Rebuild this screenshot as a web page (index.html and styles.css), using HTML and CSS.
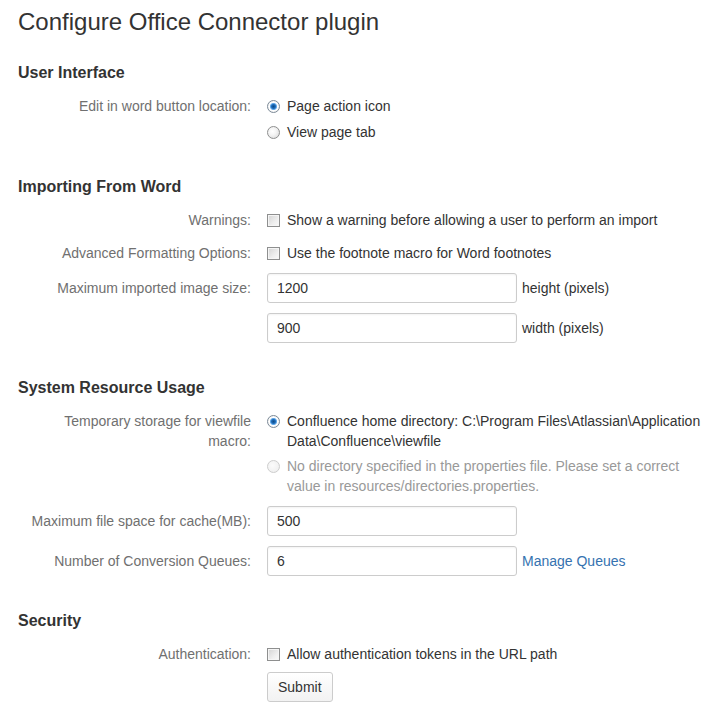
FILE: index.html
```html
<!DOCTYPE html>
<html lang="en">
<head>
    <meta charset="UTF-8">
    <title>Configure Office Connector plugin</title>
    <link rel="stylesheet" href="styles.css">
</head>
<body>
    <div class="page">
        <h1>Configure Office Connector plugin</h1>

        <form class="config-form">
            <div class="section section-first">
                <h2>User Interface</h2>
                <div class="field-group field-choice">
                    <label>Edit in word button location:</label>
                    <div class="choices">
                        <div class="option">
                            <input type="radio" name="location" checked>
                            <span>Page action icon</span>
                        </div>
                        <div class="option">
                            <input type="radio" name="location">
                            <span>View page tab</span>
                        </div>
                    </div>
                </div>
            </div>

            <div class="section">
                <h2>Importing From Word</h2>
                <div class="field-group field-choice">
                    <label>Warnings:</label>
                    <div class="option">
                        <input type="checkbox">
                        <span>Show a warning before allowing a user to perform an import</span>
                    </div>
                </div>
                <div class="field-group field-choice">
                    <label>Advanced Formatting Options:</label>
                    <div class="option">
                        <input type="checkbox">
                        <span>Use the footnote macro for Word footnotes</span>
                    </div>
                </div>
                <div class="field-group field-text">
                    <label>Maximum imported image size:</label>
                    <input class="text" type="text" value="1200">
                    <span class="suffix">height (pixels)</span>
                </div>
                <div class="field-group field-text">
                    <label></label>
                    <input class="text" type="text" value="900">
                    <span class="suffix">width (pixels)</span>
                </div>
            </div>

            <div class="section">
                <h2>System Resource Usage</h2>
                <div class="field-group field-choice">
                    <label>Temporary storage for viewfile macro:</label>
                    <div class="choices choices-tight">
                        <div class="option">
                            <input type="radio" name="storage" checked>
                            <span>Confluence home directory: C:\Program Files\Atlassian\Application Data\Confluence\viewfile</span>
                        </div>
                        <div class="option disabled">
                            <input type="radio" name="storage" disabled>
                            <span>No directory specified in the properties file. Please set a correct value in resources/directories.properties.</span>
                        </div>
                    </div>
                </div>
                <div class="field-group field-text">
                    <label>Maximum file space for cache(MB):</label>
                    <input class="text" type="text" value="500">
                </div>
                <div class="field-group field-text">
                    <label>Number of Conversion Queues:</label>
                    <input class="text" type="text" value="6">
                    <a class="suffix" href="#">Manage Queues</a>
                </div>
            </div>

            <div class="section">
                <h2>Security</h2>
                <div class="field-group field-choice">
                    <label>Authentication:</label>
                    <div class="option">
                        <input type="checkbox">
                        <span>Allow authentication tokens in the URL path</span>
                    </div>
                </div>
                <div class="field-group buttons">
                    <label></label>
                    <button class="button" type="button">Submit</button>
                </div>
            </div>
        </form>
    </div>
</body>
</html>
```

FILE: styles.css
```css
body {
    margin: 0;
    background-color: #fff;
    color: #333;
    font-family: "Liberation Sans", Arial, sans-serif;
    font-size: 14px;
    line-height: 20px;
}

.page {
    padding: 0 10px 0 18px;
}

h1 {
    font-size: 24px;
    font-weight: normal;
    line-height: 30px;
    margin: 7px 0 0;
    color: #333;
}

h2 {
    font-size: 16px;
    font-weight: bold;
    line-height: 20px;
    margin: 0 0 10px;
    color: #333;
}

.section {
    margin-top: 35px;
}

.section-first {
    margin-top: 26px;
}

.field-group {
    display: flex;
    align-items: flex-start;
    margin-top: 10px;
}

h2 + .field-group {
    margin-top: 0;
}

.field-group label {
    flex: 0 0 225px;
    padding-left: 8px;
    margin-right: 16px;
    text-align: right;
    color: #707070;
}

.field-choice {
    padding-top: 3px;
}

.field-text label {
    padding-top: 5px;
}

.choices {
    display: flex;
    flex-direction: column;
    gap: 6px;
}

.choices-tight {
    gap: 5px;
}

.option {
    display: flex;
    align-items: flex-start;
    gap: 7px;
}

.option.disabled {
    color: #999;
}

.option input {
    -webkit-appearance: none;
    appearance: none;
    flex: 0 0 auto;
    width: 13px;
    height: 13px;
    margin: 4px 0 0;
    border: 1px solid #8e8f8f;
    box-sizing: border-box;
}

.option input[type="radio"] {
    border-radius: 50%;
    background: radial-gradient(circle at 40% 40%, #ffffff 0, #f4f4f4 40%, #d5d5d5 100%);
}

.option input[type="radio"]:checked {
    border-color: #7c8a97;
    background: radial-gradient(circle, #0e4a86 0, #1d6bb8 2px, #6fb2ee 3.2px, #ffffff 4px, #e3e3e3 100%);
}

.option input[type="radio"]:disabled {
    border-color: #cdcdcd;
    background: radial-gradient(circle at 40% 40%, #fbfbfb 0, #ececec 100%);
}

.option input[type="checkbox"] {
    border-radius: 0;
    background: linear-gradient(135deg, #d3d3d3 0, #eeeeee 60%, #fafafa 100%);
    box-shadow: inset 0 0 0 1px #f5f5f5;
}

.text {
    box-sizing: border-box;
    width: 250px;
    height: 30px;
    padding: 0 9px;
    margin: 0;
    border: 1px solid #cccccc;
    border-radius: 3px;
    background: #fff;
    box-shadow: inset 0 1px 2px rgba(0, 0, 0, 0.05);
    color: #333;
    font-family: "Liberation Sans", Arial, sans-serif;
    font-size: 14px;
}

.suffix {
    margin-left: 5px;
    padding-top: 5px;
    color: #333;
}

a.suffix {
    color: #3572b0;
    text-decoration: none;
}

.buttons {
    margin-top: 8px;
}

.button {
    box-sizing: border-box;
    height: 30px;
    padding: 0 10px;
    border: 1px solid #cccccc;
    border-radius: 3px;
    background: linear-gradient(180deg, #ffffff, #f2f2f2);
    color: #333;
    font-family: "Liberation Sans", Arial, sans-serif;
    font-size: 14px;
    cursor: pointer;
}
```
